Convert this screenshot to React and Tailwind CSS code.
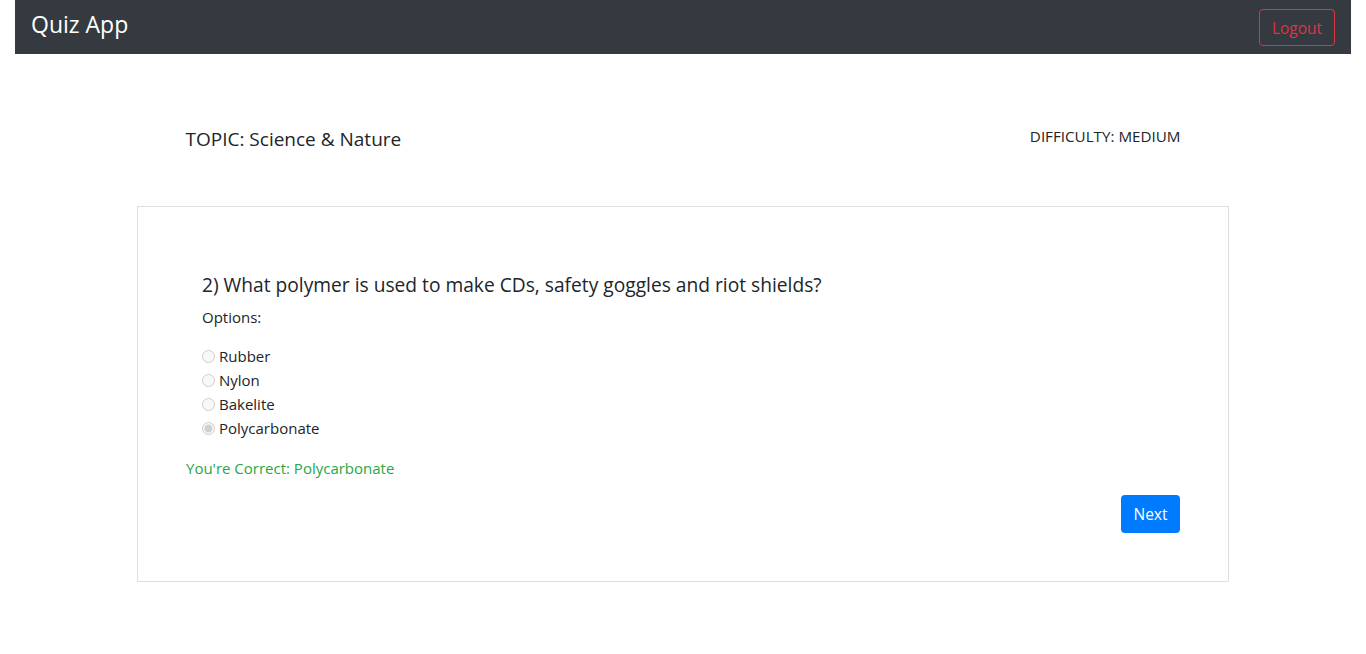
import { useState } from 'react';

const options = ['Rubber', 'Nylon', 'Bakelite', 'Polycarbonate'];

const App = () => {
  const [selected] = useState('Polycarbonate');

  return (
    <div className="min-h-screen bg-white px-[15px] text-[#212529]" style={{ fontFamily: '"Open Sans", "Noto Sans", sans-serif' }}>
      <nav className="h-[54px] bg-[#343a40] flex items-center justify-between pl-4 pr-4">
        <span className="text-white text-[23px] leading-none -translate-y-[3px]">Quiz App</span>
        <button className="h-[37px] w-[76px] border border-[#dc3545] rounded text-[#dc3545] text-[15.5px] pt-[3px]">Logout</button>
      </nav>

      <div className="w-[995px] mx-auto mt-[71px] flex justify-between items-center h-[28px]">
        <h5 className="text-[19px] leading-[28px]">TOPIC: Science &amp; Nature</h5>
        <span className="text-[15.2px] leading-[24px] -translate-y-[3px]">DIFFICULTY: MEDIUM</span>
      </div>

      <div className="w-[1092px] mx-auto mt-[53px] border border-[#dfdfdf] pt-[64px] px-12 pb-12">
        <div className="pl-4">
          <h5 className="text-[19.2px] leading-[28px]">2) What polymer is used to make CDs, safety goggles and riot shields?</h5>
          <p className="mt-[6px] text-[15px] leading-[24px]">Options:</p>
          <div className="mt-[15px]">
            {options.map((opt) => (
              <label key={opt} className="flex items-center h-[24px] text-[15px]">
                <input type="radio" name="answer" disabled checked={selected === opt} readOnly className="w-[13px] h-[13px] mr-1" />
                {opt}
              </label>
            ))}
          </div>
        </div>
        <p className="mt-4 text-[15px] leading-[24px] text-[#28a745]">You're Correct: Polycarbonate</p>
        <div className="mt-[15px] flex justify-end">
          <button className="h-[38px] w-[59px] rounded bg-[#007bff] text-white text-[15.5px] pt-[2px]">Next</button>
        </div>
      </div>
    </div>
  );
};

export default App;
